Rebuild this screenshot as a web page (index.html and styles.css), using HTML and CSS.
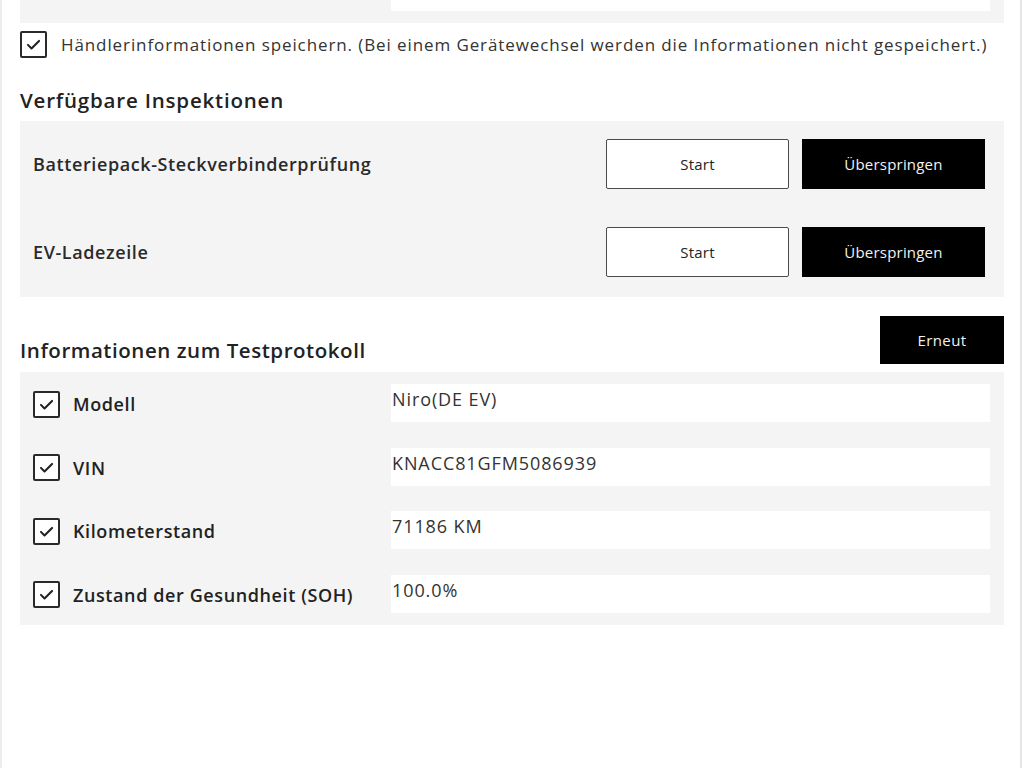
FILE: index.html
```html
<!DOCTYPE html>
<html lang="de">
<head>
    <meta charset="UTF-8">
    <meta name="viewport" content="width=device-width, initial-scale=1.0">
    <title>Testprotokoll</title>
    <link rel="stylesheet" href="styles.css">
</head>
<body>
<div class="screen">
    <!-- Händlerdaten (oberer Teil ist hinausgescrollt) -->
    <div class="panel info-panel dealer-panel">
        <div class="info-row">
            <div class="info-label plain">Händlername</div>
            <div class="info-value"></div>
        </div>
    </div>

    <label class="save-row">
        <span class="checkbox">
            <svg viewBox="0 0 24 24" width="19" height="19"><path d="M5 12.5l4.5 4.5L19 7.5" fill="none" stroke="#222" stroke-width="2.6" stroke-linecap="round" stroke-linejoin="round"/></svg>
        </span>
        <span>Händlerinformationen speichern. (Bei einem Gerätewechsel werden die Informationen nicht gespeichert.)</span>
    </label>

    <h2 class="section-title">Verfügbare Inspektionen</h2>
    <div class="panel inspect-panel">
        <div class="inspect-row">
            <div class="inspect-name">Batteriepack-Steckverbinderprüfung</div>
            <div class="btn-group">
                <button class="btn btn-light">Start</button>
                <button class="btn btn-dark">Überspringen</button>
            </div>
        </div>
        <div class="inspect-row">
            <div class="inspect-name">EV-Ladezeile</div>
            <div class="btn-group">
                <button class="btn btn-light">Start</button>
                <button class="btn btn-dark">Überspringen</button>
            </div>
        </div>
    </div>

    <div class="section-head">
        <h2 class="section-title">Informationen zum Testprotokoll</h2>
        <button class="btn btn-dark btn-retry">Erneut</button>
    </div>
    <div class="panel info-panel">
        <div class="info-row">
            <div class="info-label">
                <span class="checkbox"><svg viewBox="0 0 24 24" width="19" height="19"><path d="M5 12.5l4.5 4.5L19 7.5" fill="none" stroke="#222" stroke-width="2.6" stroke-linecap="round" stroke-linejoin="round"/></svg></span>
                Modell
            </div>
            <div class="info-value">Niro(DE EV)</div>
        </div>
        <div class="info-row">
            <div class="info-label">
                <span class="checkbox"><svg viewBox="0 0 24 24" width="19" height="19"><path d="M5 12.5l4.5 4.5L19 7.5" fill="none" stroke="#222" stroke-width="2.6" stroke-linecap="round" stroke-linejoin="round"/></svg></span>
                VIN
            </div>
            <div class="info-value">KNACC81GFM5086939</div>
        </div>
        <div class="info-row">
            <div class="info-label">
                <span class="checkbox"><svg viewBox="0 0 24 24" width="19" height="19"><path d="M5 12.5l4.5 4.5L19 7.5" fill="none" stroke="#222" stroke-width="2.6" stroke-linecap="round" stroke-linejoin="round"/></svg></span>
                Kilometerstand
            </div>
            <div class="info-value">71186 KM</div>
        </div>
        <div class="info-row">
            <div class="info-label">
                <span class="checkbox"><svg viewBox="0 0 24 24" width="19" height="19"><path d="M5 12.5l4.5 4.5L19 7.5" fill="none" stroke="#222" stroke-width="2.6" stroke-linecap="round" stroke-linejoin="round"/></svg></span>
                Zustand der Gesundheit (SOH)
            </div>
            <div class="info-value">100.0%</div>
        </div>
    </div>
</div>
</body>
</html>
```

FILE: styles.css
```css
body {
    margin: 0;
    background: #fff;
    font-family: "Open Sans", "Noto Sans", sans-serif;
    color: #2a2a2a;
}
.screen {
    box-sizing: border-box;
    width: 1022px;
    height: 768px;
    overflow: hidden;
    padding: 0 16px 0 18px;
    border-left: 2px solid #ededed;
    border-right: 2px solid #e6e6e6;
}
.panel {
    background: #f4f4f4;
}

/* top panel, scrolled partly out of view */
.dealer-panel {
    margin-top: -39px;
}

.save-row {
    display: flex;
    align-items: center;
    gap: 14px;
    margin-top: 8px;
    height: 26px;
    font-size: 17px;
    letter-spacing: 0.9px;
    color: #333;
}
.checkbox {
    box-sizing: border-box;
    flex: none;
    width: 27px;
    height: 27px;
    border: 2px solid #2a2a2a;
    border-radius: 2px;
    background: #fff;
    display: flex;
    align-items: center;
    justify-content: center;
}

.section-title {
    margin: 0;
    font-size: 20.5px;
    line-height: 24px;
    font-weight: 600;
    letter-spacing: 0.8px;
    color: #222;
}
.save-row + .section-title {
    margin-top: 31px;
    margin-bottom: 9px;
}

.inspect-panel {
    display: flex;
    flex-direction: column;
    gap: 38px;
    padding: 18px 19px 20px 13px;
}
.inspect-row {
    display: flex;
    align-items: center;
    justify-content: space-between;
    height: 50px;
}
.inspect-name {
    font-size: 18px;
    font-weight: 600;
    letter-spacing: 0.6px;
    color: #2a2a2a;
}
.btn-group {
    display: flex;
    gap: 13px;
}
.btn {
    box-sizing: border-box;
    width: 183px;
    height: 50px;
    font-family: "Open Sans", "Noto Sans", sans-serif;
    font-size: 15px;
    letter-spacing: 0.2px;
    cursor: pointer;
}
.btn-light {
    background: #fff;
    color: #222;
    border: 1.5px solid #4a4a4a;
    border-radius: 2px;
}
.btn-dark {
    background: #000;
    color: #f2f2f2;
    border: none;
}

.section-head {
    display: flex;
    justify-content: space-between;
    align-items: flex-end;
    margin-top: 19px;
    margin-bottom: 8px;
}
.section-head .section-title {
    padding-bottom: 2px;
    letter-spacing: 0.55px;
}
.btn-retry {
    width: 124px;
    height: 48px;
    letter-spacing: 0.4px;
}

.info-panel {
    display: flex;
    flex-direction: column;
    gap: 25.5px;
    padding: 12px 14px 12px 13px;
}
.info-row {
    display: flex;
    height: 38px;
}
.info-label {
    width: 358px;
    flex: none;
    display: flex;
    align-items: center;
    gap: 13px;
    padding-top: 2px;
    font-size: 18px;
    font-weight: 600;
    letter-spacing: 0.6px;
    color: #222;
}
.info-label.plain {
    color: #aaa;
}
.info-value {
    flex: 1;
    background: #fff;
    padding: 3px 1px 0;
    font-size: 18px;
    line-height: 24px;
    letter-spacing: 0.9px;
    color: #333;
}
```
